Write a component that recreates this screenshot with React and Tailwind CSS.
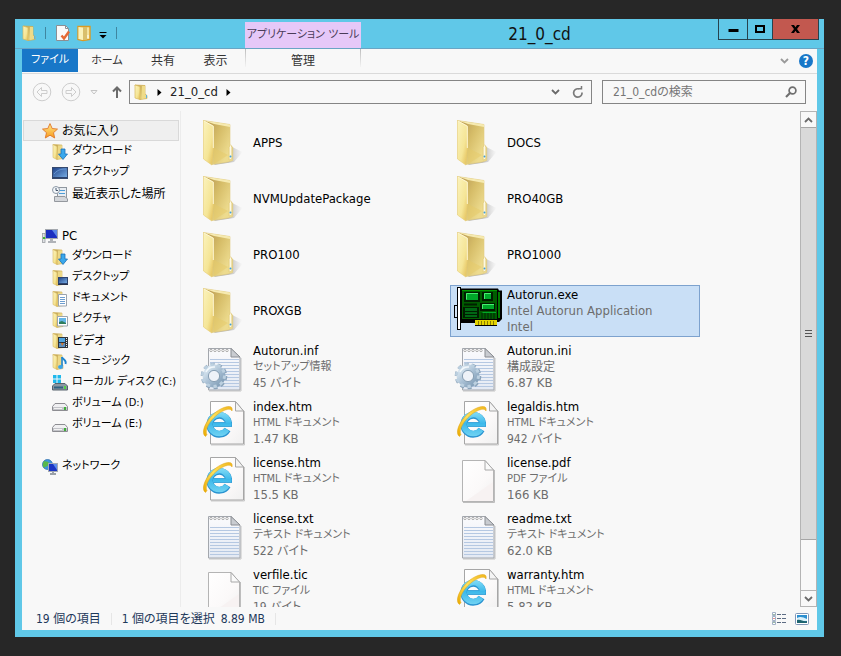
import React from 'react';

const NAV = [
  {
    label: 'お気に入り', icon: 'star', selected: true,
    children: [
      { label: 'ダウンロード', icon: 'download' },
      { label: 'デスクトップ', icon: 'desktop' },
      { label: '最近表示した場所', icon: 'recent' },
    ],
  },
  {
    label: 'PC', icon: 'pc',
    children: [
      { label: 'ダウンロード', icon: 'download' },
      { label: 'デスクトップ', icon: 'desktopFolder' },
      { label: 'ドキュメント', icon: 'documents' },
      { label: 'ピクチャ', icon: 'pictures' },
      { label: 'ビデオ', icon: 'videos' },
      { label: 'ミュージック', icon: 'music' },
      { label: 'ローカル ディスク (C:)', icon: 'system' },
      { label: 'ボリューム (D:)', icon: 'drive' },
      { label: 'ボリューム (E:)', icon: 'drive' },
    ],
  },
  { label: 'ネットワーク', icon: 'network', children: [] },
];

const FILES = [
  { name: 'APPS', icon: 'folder' },
  { name: 'DOCS', icon: 'folder' },
  { name: 'NVMUpdatePackage', icon: 'folder' },
  { name: 'PRO40GB', icon: 'folder' },
  { name: 'PRO100', icon: 'folder' },
  { name: 'PRO1000', icon: 'folder' },
  { name: 'PROXGB', icon: 'folder' },
  { name: 'Autorun.exe', icon: 'card', type: 'Intel Autorun Application', size: 'Intel', selected: true },
  { name: 'Autorun.inf', icon: 'gear', type: 'セットアップ情報', size: '45 バイト' },
  { name: 'Autorun.ini', icon: 'gear', type: '構成設定', size: '6.87 KB' },
  { name: 'index.htm', icon: 'html', type: 'HTML ドキュメント', size: '1.47 KB' },
  { name: 'legaldis.htm', icon: 'html', type: 'HTML ドキュメント', size: '942 バイト' },
  { name: 'license.htm', icon: 'html', type: 'HTML ドキュメント', size: '15.5 KB' },
  { name: 'license.pdf', icon: 'blank', type: 'PDF ファイル', size: '166 KB' },
  { name: 'license.txt', icon: 'text', type: 'テキスト ドキュメント', size: '522 バイト' },
  { name: 'readme.txt', icon: 'text', type: 'テキスト ドキュメント', size: '62.0 KB' },
  { name: 'verfile.tic', icon: 'blank', type: 'TIC ファイル', size: '19 バイト' },
  { name: 'warranty.htm', icon: 'html', type: 'HTML ドキュメント', size: '5.82 KB' },
];

/* Latin labels are set larger than Japanese ones, and long katakana words smaller. */
function textSize(label) {
  if (/^[\x20-\x7e]+$/.test(label)) return 'text-[13px]';
  if (/[ァ-ヶー]{4,}/.test(label)) return 'text-[11px]';
  return 'text-[12px]';
}

/* Gradients shared by all the icons. */
function Gradients() {
  return (
    <svg width="0" height="0" className="absolute" aria-hidden="true">
      <defs>
        <linearGradient id="flap" x1="0" y1="0" x2="1" y2="1">
          <stop offset="0" stopColor="#fbf3bd" />
          <stop offset="0.6" stopColor="#f5e596" />
          <stop offset="1" stopColor="#e2bc52" />
        </linearGradient>
        <linearGradient id="inside" x1="0.300" y1="0" x2="1" y2="0.500">
          <stop offset="0" stopColor="#c0a35a" />
          <stop offset="0.4" stopColor="#d6bd68" />
          <stop offset="1" stopColor="#eddb8e" />
        </linearGradient>
        <linearGradient id="shade" x1="0" y1="0" x2="1" y2="0">
          <stop offset="0.500" stopColor="#777" stopOpacity="0.5" />
          <stop offset="1" stopColor="#999" stopOpacity="0" />
        </linearGradient>
        <linearGradient id="paper" x1="0" y1="0" x2="1" y2="1">
          <stop offset="0" stopColor="#ffffff" />
          <stop offset="0.6" stopColor="#fbf9f9" />
          <stop offset="1" stopColor="#f0f0f0" />
        </linearGradient>
        <linearGradient id="note" x1="0" y1="0" x2="0" y2="1">
          <stop offset="0" stopColor="#fbfbfd" />
          <stop offset="1" stopColor="#e3e9f3" />
        </linearGradient>
        <linearGradient id="steel" x1="0" y1="0" x2="1" y2="1">
          <stop offset="0" stopColor="#dfebf4" />
          <stop offset="0.5" stopColor="#a9c0d4" />
          <stop offset="1" stopColor="#7e9bb5" />
        </linearGradient>
        <linearGradient id="sea" gradientUnits="userSpaceOnUse" x1="0" y1="12" x2="0" y2="37">
          <stop offset="0" stopColor="#8be0f8" />
          <stop offset="0.5" stopColor="#3cb8ea" />
          <stop offset="1" stopColor="#6fd2f2" />
        </linearGradient>
        <linearGradient id="gold" x1="0" y1="1" x2="1" y2="0">
          <stop offset="0" stopColor="#e9a900" />
          <stop offset="0.5" stopColor="#ffe05a" />
          <stop offset="1" stopColor="#efb51a" />
        </linearGradient>
        <linearGradient id="screen" x1="0" y1="0" x2="1" y2="1">
          <stop offset="0" stopColor="#1c3f86" />
          <stop offset="1" stopColor="#7db4ea" />
        </linearGradient>
        <linearGradient id="starfill" x1="0" y1="0" x2="0" y2="1">
          <stop offset="0" stopColor="#ffe98a" />
          <stop offset="1" stopColor="#f79a1c" />
        </linearGradient>
      </defs>
    </svg>
  );
}

function NotePage() {
  return (
    <>
      <path d="M9 48H41V15" fill="none" stroke="#c4c4c4" />
      <path d="M8.500 5.500H31L40 14V47H8.500Z" fill="url(#note)" stroke="#a3a7ad" />
      {[16, 19, 22, 25, 28, 31, 34, 37, 40, 43].map((y) => (
        <path key={y} d={`M10 ${y}.5H39`} stroke="#b5c8e2" />
      ))}
      {[11, 15, 19, 23, 27].map((x) => (
        <circle key={x} cx={x} cy="7.500" r="1.200" fill="#fff" stroke="#9b9b9b" strokeWidth="0.800" />
      ))}
      <path d="M31 5.500V14H40Z" fill="#c9ccd1" stroke="#8a8d92" />
    </>
  );
}

const LARGE = {
  folder: (
    <>
      <path d="M30 27L42.500 33L34 43L14 46Z" fill="url(#shade)" />
      <path d="M3.500 1.500L30 5.500V26L32.700 28V41.500L28 43L12 45.500V8Z" fill="url(#inside)" stroke="#e0ca7e" strokeWidth="0.600" />
      <path d="M4 1.500L30 5.500V8L14 5Z" fill="#f6eab0" />
      <path d="M14 29L28 36L14 45Z" fill="#e6c968" opacity="0.500" />
      <path d="M29.200 28.500Q30.600 23 31.800 28.500V40L29.200 41Z" fill="#fdf9e2" stroke="#d8bd62" strokeWidth="0.500" />
      <circle cx="30.500" cy="37.500" r="1" fill="#3f9fd8" />
      <path d="M3.500 1.500L13.500 7V29L11.800 46L3.500 40Z" fill="url(#flap)" stroke="#e6cb71" strokeWidth="0.600" />
      <path d="M4 2L13.300 7.200V29" fill="none" stroke="#fffbe0" strokeWidth="0.900" />
    </>
  ),
  gear: (
    <>
      <NotePage />
      <circle cx="14" cy="33" r="11.300" fill="none" stroke="#8ca4ba" strokeWidth="4" strokeDasharray="3.800 3.300" />
      <circle cx="14" cy="33" r="8.400" fill="none" stroke="url(#steel)" strokeWidth="6" />
      <circle cx="13.500" cy="32.500" r="11" fill="none" stroke="#bcd0e0" strokeWidth="3" strokeDasharray="3.400 3.510" />
      <circle cx="14" cy="33" r="5.600" fill="#eef2f8" stroke="#7f97ad" strokeWidth="0.900" />
      <path d="M6 29a9 9 0 0 1 9-5" fill="none" stroke="#f2f8fc" strokeWidth="1.400" />
    </>
  ),
  html: (
    <>
      <path d="M11 46H44.500V12" fill="none" stroke="#c9c9c9" />
      <path d="M10.500 2.500H35.500L43.500 12V45H10.500Z" fill="url(#paper)" stroke="#a6a6a6" />
      <path d="M35.500 2.500V12H43.500Z" fill="#f4f4f4" stroke="#a6a6a6" />
      <g fill="none" stroke="#2a93d0">
        <path d="M27.500 30.500A9.500 9.500 0 1 1 28.700 24.700" strokeWidth="6.800" />
        <path d="M13 25.500H32" strokeWidth="4.800" />
      </g>
      <g fill="none" stroke="url(#sea)">
        <path d="M27 30.500A9.500 9.500 0 1 1 28.700 25.500" strokeWidth="5.600" />
      </g>
      <path d="M13 23.700H31.400V27.300H13Z" fill="url(#sea)" />
      <path d="M5.500 37.500C-1 33 9 14 24 8.500C30 6.400 33 7.500 32 12C31 9.500 27 10 23 12C12 17.500 4 30 7 35.500Z" fill="url(#gold)" stroke="#e0a312" strokeWidth="0.500" />
    </>
  ),
  blank: (
    <>
      <path d="M9 47.500H40.500V15" fill="none" stroke="#bdbdbd" />
      <path d="M8.500 5.500H31L39.500 15V46.500H8.500Z" fill="url(#paper)" stroke="#b4b4b4" />
      <path d="M12 46L39 27V46Z" fill="#f7f2f2" />
      <path d="M31 5.500V15H39.500Z" fill="#fafafa" stroke="#a8a8a8" />
    </>
  ),
  text: <NotePage />,
  card: (
    <>
      <path d="M7 1.500H44L45 3.500H48V32L45 35H43V39H21V36H7Z" fill="#000" />
      <path d="M8 3H43V32H8Z" fill="#005c00" />
      <path d="M44 5H46V31H44Z" fill="#007c00" />
      <path d="M8 3.500H43" stroke="#009a00" />
      <rect x="0.500" y="18.500" width="4" height="12" fill="#d5e4f5" stroke="#000" />
      <rect x="3.500" y="0.500" width="3" height="42" fill="#fff" stroke="#000" />
      <rect x="10" y="5" width="16" height="10" fill="#001c00" />
      <rect x="12" y="6" width="12" height="7" fill="#00a82a" />
      <path d="M12.500 12.500V6.500H24" fill="none" stroke="#48f070" />
      <rect x="28" y="5" width="11" height="9" fill="#001c00" />
      <rect x="30" y="6" width="7" height="6" fill="#00a82a" />
      <path d="M30.500 12V6.500H37" fill="none" stroke="#48f070" />
      <rect x="26" y="16" width="15" height="8" fill="#001c00" />
      <rect x="28" y="17" width="12" height="5" fill="#00a82a" />
      <path d="M28.500 22V17.500H40" fill="none" stroke="#48f070" />
      <path d="M10 17.500H23" stroke="#002000" strokeWidth="2" />
      <rect x="9" y="20" width="16" height="11" fill="#001c00" />
      {[12, 16, 20].map((x) => (
        <path key={x} d={`M${x} 21V30M${x + 2} 21V30`} stroke="#00b02a" />
      ))}
      <path d="M9 24.500H25M9 27.500H25" stroke="#001c00" />
      <path d="M28 26V32M31 26V32M34 26V32M37 26V32M40 26V32" stroke="#00200a" />
      <path d="M28.500 25.500H42" stroke="#00a82a" />
      <rect x="21" y="33" width="22" height="5" fill="#e4d400" />
      <path d="M24.500 34V38M27.500 34V38M30.500 34V38M33.500 34V38M36.500 34V38M39.500 34V38" stroke="#8a7c00" />
    </>
  ),
};

const smallFolder = (
  <>
    <path d="M1 0.500L10 1V10L11 11V14.500L5 15.500Z" fill="url(#inside)" stroke="#d0b055" strokeWidth="0.600" />
    <path d="M6 1.500H10V14L6 14.500Z" fill="#ecd888" />
    <path d="M1 0.500L5 2.500V15.500L1 13.500Z" fill="url(#flap)" stroke="#d8bb62" strokeWidth="0.600" />
  </>
);

const SMALL = {
  star: (
    <path d="M8 0.600L10.200 5.500L15.500 6.100L11.500 9.700L12.700 15L8 12.200L3.300 15L4.500 9.700L0.500 6.100L5.800 5.500Z" fill="url(#starfill)" stroke="#e0762a" strokeWidth="0.900" />
  ),
  download: (
    <>
      {smallFolder}
      <path d="M9 5H13V10H15.500L11 15.500L6.500 10H9Z" fill="#3aa8ec" stroke="#1c70b8" strokeWidth="0.800" />
    </>
  ),
  desktop: (
    <>
      <rect x="0.500" y="2.500" width="15" height="11" fill="url(#screen)" stroke="#35496e" />
      <path d="M1 12.500H15" stroke="#2c446f" />
      <path d="M2 9C6 4 11 4 14 4" fill="none" stroke="#6ea0dc" strokeWidth="0.800" />
    </>
  ),
  recent: (
    <>
      <rect x="5.500" y="1.500" width="9" height="10" fill="#e8edf2" stroke="#8f979f" />
      <path d="M7 4.500H13M7 7.500H13" stroke="#4d9cd6" />
      <circle cx="4" cy="4" r="3.500" fill="#f4f7fa" stroke="#8c98a6" />
      <path d="M4 2V4.500H6" fill="none" stroke="#43566e" />
      <path d="M2.500 10.500H13L15.500 13V15.500H2.500Z" fill="#d3d6da" stroke="#94989e" />
    </>
  ),
  pc: (
    <>
      <rect x="3.500" y="1.500" width="12" height="9" fill="#1a2ec0" stroke="#a4a8ae" />
      <path d="M10 2H15V9Z" fill="#5a86e8" />
      <path d="M8 11H11V13H14V15H6V13H8Z" fill="#b0b3b8" />
      <rect x="0.500" y="5.500" width="2.500" height="9" fill="#dfe1e4" stroke="#9a9da2" strokeWidth="0.800" />
      <path d="M1 9H3V11H1Z" fill="#3bb534" />
    </>
  ),
  desktopFolder: (
    <>
      {smallFolder}
      <rect x="6.500" y="7.500" width="9" height="6" fill="url(#screen)" stroke="#2d4470" />
      <path d="M6 14.500H16" stroke="#28324a" />
    </>
  ),
  documents: (
    <>
      {smallFolder}
      <path d="M6.500 3.500H14.500V15H6.500Z" fill="#fff" stroke="#9aa3ad" />
      <path d="M8 6.500H13M8 8.500H13M8 10.500H13M8 12.500H13" stroke="#6d9dcf" />
    </>
  ),
  pictures: (
    <>
      {smallFolder}
      <path d="M5.500 4.500H15.500V14H5.500Z" fill="#fff" stroke="#9aa3ad" />
      <rect x="7" y="6" width="7" height="6" fill="#63b5e6" />
      <path d="M7 12V10L10 9L14 11V12Z" fill="#2f7d5c" />
    </>
  ),
  videos: (
    <>
      {smallFolder}
      <rect x="6" y="4" width="10" height="11" fill="#30353c" />
      <rect x="7" y="5" width="6" height="4" fill="#4fa3de" />
      <rect x="7" y="10" width="6" height="4" fill="#5a8fc0" />
      <path d="M9 10H12L10 13Z" fill="#d0782f" />
      <path d="M14.500 5V15" stroke="#eee" strokeDasharray="1 1" />
    </>
  ),
  music: (
    <>
      {smallFolder}
      <path d="M10 3V12.500" stroke="#1f86d0" strokeWidth="1.600" />
      <path d="M10 3C11 6 15 6 13.500 10" fill="none" stroke="#1f86d0" strokeWidth="1.800" />
      <ellipse cx="8.500" cy="13" rx="2.500" ry="2" fill="#3aa5ec" />
    </>
  ),
  system: (
    <>
      <path d="M1 0H4.500V3.500H1ZM5.500 0H9V3.500H5.500ZM1 4.500H4.500V8H1ZM5.500 4.500H9V8H5.500Z" fill="#1fb8ec" />
      <path d="M3 8.500H13L15.500 11V15H0.500V11Z" fill="#8b97a2" stroke="#56626d" />
      <path d="M2 12.500H11" stroke="#31617f" strokeWidth="2" />
      <rect x="12" y="11" width="2" height="3" fill="#4fd046" />
    </>
  ),
  drive: (
    <>
      <path d="M3 7.500H13L15.500 10.500V14.500H0.500V10.500Z" fill="#f0f0f2" stroke="#8d8d92" />
      <path d="M1 11H15V14H1Z" fill="#c3c4c9" />
      <path d="M2 12.500H10" stroke="#f2f2f2" />
      <rect x="12" y="11" width="2" height="3" fill="#3fae3a" />
    </>
  ),
  network: (
    <>
      <circle cx="5.500" cy="5.500" r="5" fill="#3d95dc" stroke="#2668a8" strokeWidth="0.700" />
      <path d="M2 2C5 3 7 2 7 5C6 8 3 7 2 9C0 6 1 4 2 2Z" fill="#58b84a" />
      <rect x="6.500" y="4.500" width="9" height="8" fill="#1a35c4" stroke="#a3a9b2" />
      <path d="M11 5H15V11Z" fill="#5d8cec" />
      <path d="M10 13H12V14H14V16H8V14H10Z" fill="#9aa0a8" />
    </>
  ),
  folder: (
    <>
      <path d="M1 1L11 1.500V10L13 11.500V14.500L6 15.500Z" fill="url(#inside)" stroke="#d0ac4c" strokeWidth="0.700" />
      <path d="M8 2H11V14L8 15Z" fill="#efdb88" />
      <path d="M1 1L6 2.500V15.500L1 14Z" fill="url(#flap)" stroke="#d8b95c" strokeWidth="0.700" />
      <path d="M12.500 11V14" stroke="#5fb0dc" />
    </>
  ),
  newFolder: (
    <>
      <path d="M1 1.500L13 1.500V14.500L6 15.500L1 14.500Z" fill="#f3e3a0" stroke="#dc9a22" strokeWidth="1.400" />
      <path d="M6 2H10V14.500L6 15Z" fill="#d9bf6c" />
      <path d="M1.500 2L6 3V15L1.500 14Z" fill="#fbf2bb" />
      <path d="M11 10V13" stroke="#fff" />
    </>
  ),
  check: (
    <>
      <path d="M1.500 0.500H10.500L13.500 3.500V15.500H1.500Z" fill="#fafafa" stroke="#8c8f94" />
      <path d="M10.500 0.500V3.500H13.500" fill="none" stroke="#8c8f94" />
      <path d="M6.500 10.500L9 13.500L14 6.500" fill="none" stroke="#e56a35" strokeWidth="2.400" />
    </>
  ),
};

function Icon({ art, size = 16 }) {
  return (
    <svg width={size} height={size} viewBox={`0 0 ${size} ${size}`} className="shrink-0 overflow-visible" aria-hidden="true">
      {art}
    </svg>
  );
}

function NavRow({ item, level }) {
  return (
    <button
      type="button"
      className={`flex h-[21px] w-full items-center gap-1 border whitespace-nowrap ${level === 0 ? 'pl-[18px]' : 'pl-7'} ${textSize(item.label)} ${
        item.selected ? 'border-[#d9d9d9] bg-[#efefef]' : 'border-transparent'
      }`}
    >
      <Icon art={SMALL[item.icon]} />
      <span>{item.label}</span>
    </button>
  );
}

function FileTile({ file }) {
  return (
    <li
      className={`flex h-[52px] items-center gap-[5px] border pl-[3px] ${
        file.selected ? 'border-[#7da2ce] bg-[#c9dff6]' : 'border-transparent'
      }`}
    >
      <Icon art={LARGE[file.icon]} size={48} />
      <div className="min-w-0 leading-4 whitespace-nowrap text-[#6d6d6d]">
        <div className="text-[13px] leading-4 text-black">{file.name}</div>
        {file.type && <div className={textSize(file.type)}>{file.type}</div>}
        {file.size && <div className={textSize(file.size)}>{file.size}</div>}
      </div>
    </li>
  );
}

function Chevron({ up = false, color = '#6a6a6a' }) {
  return (
    <svg width="9" height="6" viewBox="0 0 9 6" aria-hidden="true">
      <path d={up ? 'M1 5L4.500 1.500L8 5' : 'M1 1L4.500 4.500L8 1'} fill="none" stroke={color} strokeWidth="1.800" />
    </svg>
  );
}

function TitleBar() {
  return (
    <header className="flex h-[30px] border-b border-[#6aa5c4] pl-[7px]">
      <div className="flex w-[223px] shrink-0 items-center pb-px">
        <Icon art={SMALL.folder} />
        <span className="ml-[7px] h-3 w-px bg-[#3f86a0]" />
        <button type="button" aria-label="プロパティ" className="ml-[9px]"><Icon art={SMALL.check} /></button>
        <button type="button" aria-label="新しいフォルダー" className="ml-[6px]"><Icon art={SMALL.newFolder} /></button>
        <button type="button" aria-label="クイック アクセス ツール バーのカスタマイズ" className="ml-[6px] pt-1">
          <svg width="8" height="7" viewBox="0 0 8 7" aria-hidden="true">
            <path d="M0.500 0.500H7.500" stroke="#000" />
            <path d="M0.500 3H7.500L4 6.500Z" fill="#000" />
          </svg>
        </button>
        <span className="ml-[9px] h-3 w-px bg-[#3f86a0]" />
      </div>
      <div className="mt-[3px] flex w-[116px] shrink-0 items-center justify-center bg-[#e6c8f8] text-[11px] whitespace-nowrap text-[#4a3c58]">
        アプリケーション ツール
      </div>
      <h1 className="min-w-0 flex-1 self-center truncate text-center text-[17px] leading-6 text-[#111]">21_0_cd</h1>
      <div className="mr-[5px] flex h-[21px] shrink-0 border border-t-0 border-[#27434e]">
        <button type="button" aria-label="最小化" className="flex w-7 items-center justify-center">
          <svg width="11" height="8" viewBox="0 0 11 8"><path d="M0.500 4H10.500V7H0.500Z" fill="#000" /></svg>
        </button>
        <button type="button" aria-label="最大化" className="flex w-[26px] items-center justify-center border-x border-[#27434e]">
          <svg width="10" height="8" viewBox="0 0 10 8"><path d="M1 1H9V7H1Z" fill="none" stroke="#000" strokeWidth="2" /></svg>
        </button>
        <button type="button" aria-label="閉じる" className="flex w-[45px] items-center justify-center bg-[#c2584f]">
          <svg width="9" height="8" viewBox="0 0 9 8">
            <path d="M0 0H3L4.500 2.200L6 0H9L6 4L9 8H6L4.500 5.800L3 8H0L3 4Z" fill="#000" />
          </svg>
        </button>
      </div>
    </header>
  );
}

function Ribbon() {
  return (
    <nav aria-label="リボン" className="flex h-[25px] border-b border-[#dadada] text-[#333]">
      <button type="button" className="mb-px w-14 bg-[#1877c8] text-[11px] text-white">ファイル</button>
      <button type="button" className="w-[58px] text-[11px]">ホーム</button>
      <button type="button" className="w-[54px]">共有</button>
      <button type="button" className="w-[51px]">表示</button>
      <div className="ml-1 flex w-[116px] justify-between">
        <span className="h-[18px] w-px bg-gradient-to-b from-[#bdbdbd] to-[#f3f3f3]" />
        <button type="button" className="flex-1">管理</button>
        <span className="h-[18px] w-px bg-gradient-to-b from-[#bdbdbd] to-[#f3f3f3]" />
      </div>
      <div className="ml-auto flex items-center gap-[10px] pr-1">
        <button type="button" aria-label="リボンの展開"><Chevron color="#9a9a9a" /></button>
        <button type="button" aria-label="ヘルプ" className="flex size-[14px] items-center justify-center rounded-full bg-[#1877c8] text-[12px] leading-none font-bold text-white">
          ?
        </button>
      </div>
    </nav>
  );
}

function AddressRow() {
  return (
    <div className="flex h-[37px] shrink-0 items-start pt-[6px] pr-[11px] pl-[10px] text-[#222]">
      <div className="flex h-6 w-[97px] shrink-0 items-center">
        <button type="button" aria-label="戻る">
          <svg width="20" height="20" viewBox="0 0 20 20" fill="none" stroke="#cdcdcd">
            <circle cx="10" cy="10" r="8.800" />
            <path d="M9.500 5.500L5 10L9.500 14.500V11.500H15V8.500H9.500Z" />
          </svg>
        </button>
        <button type="button" aria-label="進む" className="ml-[9px]">
          <svg width="20" height="20" viewBox="0 0 20 20" fill="none" stroke="#cdcdcd">
            <circle cx="10" cy="10" r="8.800" />
            <path d="M10.500 5.500L15 10L10.500 14.500V11.500H5V8.500H10.500Z" />
          </svg>
        </button>
        <button type="button" aria-label="履歴" className="ml-[9px]">
          <svg width="8" height="5" viewBox="0 0 8 5"><path d="M1 0.500H7L4 4Z" fill="none" stroke="#c4c4c4" /></svg>
        </button>
        <button type="button" aria-label="上へ" className="ml-[14px]">
          <svg width="10" height="12" viewBox="0 0 10 12" fill="none" stroke="#6b6b6b" strokeWidth="2">
            <path d="M5 12V2M1 5.500L5 1.500L9 5.500" />
          </svg>
        </button>
      </div>
      <div className="flex h-6 min-w-0 flex-1 items-center border border-[#858585] pr-[7px] pl-1">
        <Icon art={SMALL.folder} />
        <svg width="5" height="7" viewBox="0 0 5 7" className="ml-[7px] shrink-0"><path d="M0.500 0L4.500 3.500L0.500 7Z" fill="#000" /></svg>
        <button type="button" className="ml-2 text-[13px]">21_0_cd</button>
        <svg width="5" height="7" viewBox="0 0 5 7" className="ml-2 shrink-0"><path d="M0.500 0L4.500 3.500L0.500 7Z" fill="#000" /></svg>
        <button type="button" aria-label="以前の場所" className="ml-auto"><Chevron /></button>
        <button type="button" aria-label="更新" className="ml-3">
          <svg width="12" height="12" viewBox="0 0 12 12" fill="none" stroke="#7a7a7a" strokeWidth="1.700">
            <path d="M10 6.500A4.200 4.200 0 1 1 6.500 2.800" />
            <path d="M6 2.800H9.500M9.500 0V3.600" strokeWidth="1.500" />
          </svg>
        </button>
      </div>
      <label className="ml-[10px] flex h-6 w-[204px] shrink-0 items-center border border-[#858585] pr-2 pl-[10px]">
        <input type="search" aria-label="検索" placeholder="21_0_cdの検索" className="min-w-0 flex-1 bg-transparent outline-none placeholder:text-[#757575]" />
        <svg width="12" height="12" viewBox="0 0 12 12" fill="none" stroke="#6f6f6f" className="shrink-0">
          <circle cx="7.500" cy="4.500" r="3.400" strokeWidth="1.700" />
          <path d="M5 7L1 11" strokeWidth="2.200" />
        </svg>
      </label>
    </div>
  );
}

function ScrollBar() {
  return (
    <div className="flex w-[17px] shrink-0 flex-col border border-[#b4b4b4]">
      <button type="button" aria-label="上へスクロール" className="flex h-[15px] shrink-0 items-center justify-center"><Chevron up /></button>
      <div className="flex flex-[413] flex-col items-center justify-center gap-0.5 border-y border-[#a6a6a6] bg-[#d9d9d9]">
        <span className="h-px w-[7px] bg-[#555]" />
        <span className="h-px w-[7px] bg-[#555]" />
        <span className="h-px w-[7px] bg-[#555]" />
      </div>
      <div className="flex-[50]" />
      <button type="button" aria-label="下へスクロール" className="flex h-4 shrink-0 items-center justify-center border-t border-[#b4b4b4]"><Chevron /></button>
    </div>
  );
}

function StatusBar() {
  return (
    <footer className="flex h-[23px] shrink-0 items-center pr-2 pl-[14px] whitespace-nowrap text-[#1e395b]">
      <span>19 個の項目</span>
      <span className="mx-[10px] h-3 w-px bg-[#e6e6e6]" />
      <span>1 個の項目を選択</span>
      <span className="ml-[6px]">8.89 MB</span>
      <span className="mx-[10px] h-3 w-px bg-[#e6e6e6]" />
      <div className="ml-auto flex items-center gap-2">
        <button type="button" aria-label="詳細表示">
          <svg width="16" height="13" viewBox="0 0 16 13" fill="none">
            <path d="M1.500 0.500H4.500V3.500H1.500ZM1.500 4.500H4.500V8.500H1.500ZM1.500 9.500H4.500V12.500H1.500Z" fill="#fff" stroke="#a3b1c6" />
            <path d="M2.500 2.500H3.500M2.500 10.500H3.500" stroke="#3a7d4a" />
            <path d="M2.500 6.500H3.500" stroke="#d02020" />
            <path d="M6 2.500H10M11 2.500H15M6 6.500H10M11 6.500H15M6 10.500H10M11 10.500H15" stroke="#5d6c84" />
          </svg>
        </button>
        <button type="button" aria-label="大きいアイコン">
          <svg width="14" height="12" viewBox="0 0 14 12">
            <rect x="0.500" y="0.500" width="13" height="11" rx="1" fill="#fff" stroke="#7f97b8" />
            <rect x="2" y="2" width="10" height="8" fill="#2b8fd0" />
            <path d="M2 5C5 3 8 4 12 6V8H2Z" fill="#d8f0fa" />
            <path d="M2 7C6 6 8 9 12 8V10H2Z" fill="#1d6470" />
          </svg>
        </button>
      </div>
    </footer>
  );
}

export default function App() {
  return (
    <div className="flex h-screen min-h-[400px] min-w-[640px] bg-[#272727] pt-[19px] pr-[17px] pb-[19px] pl-[15px] font-['DejaVu_Sans_Condensed','DejaVu_Sans','Noto_Sans_CJK_JP',sans-serif] text-[12px] [font-feature-settings:'palt']">
      <Gradients />
      <div className="flex min-w-0 flex-1 flex-col bg-[#60c8e8]">
        <TitleBar />
        <div className="mx-[7px] mb-[7px] flex min-h-0 flex-1 flex-col bg-[#f8f8f8]">
          <Ribbon />
          <AddressRow />
          <div className="flex min-h-0 flex-1">
            <aside className="flex w-[159px] shrink-0 flex-col gap-[21px] border-r border-[#ececec] pt-[9px] pr-px pl-px">
              {NAV.map((group) => (
                <div key={group.label}>
                  <NavRow item={group} level={0} />
                  {group.children.map((child) => (
                    <NavRow key={child.label} item={child} level={1} />
                  ))}
                </div>
              ))}
            </aside>
            <main className="min-w-0 flex-1 overflow-hidden pt-[6px] pl-[15px]">
              <ul className="grid grid-cols-[repeat(auto-fill,250px)] gap-1">
                {FILES.map((file) => (
                  <FileTile key={file.name} file={file} />
                ))}
              </ul>
            </main>
            <ScrollBar />
          </div>
          <StatusBar />
        </div>
      </div>
    </div>
  );
}
